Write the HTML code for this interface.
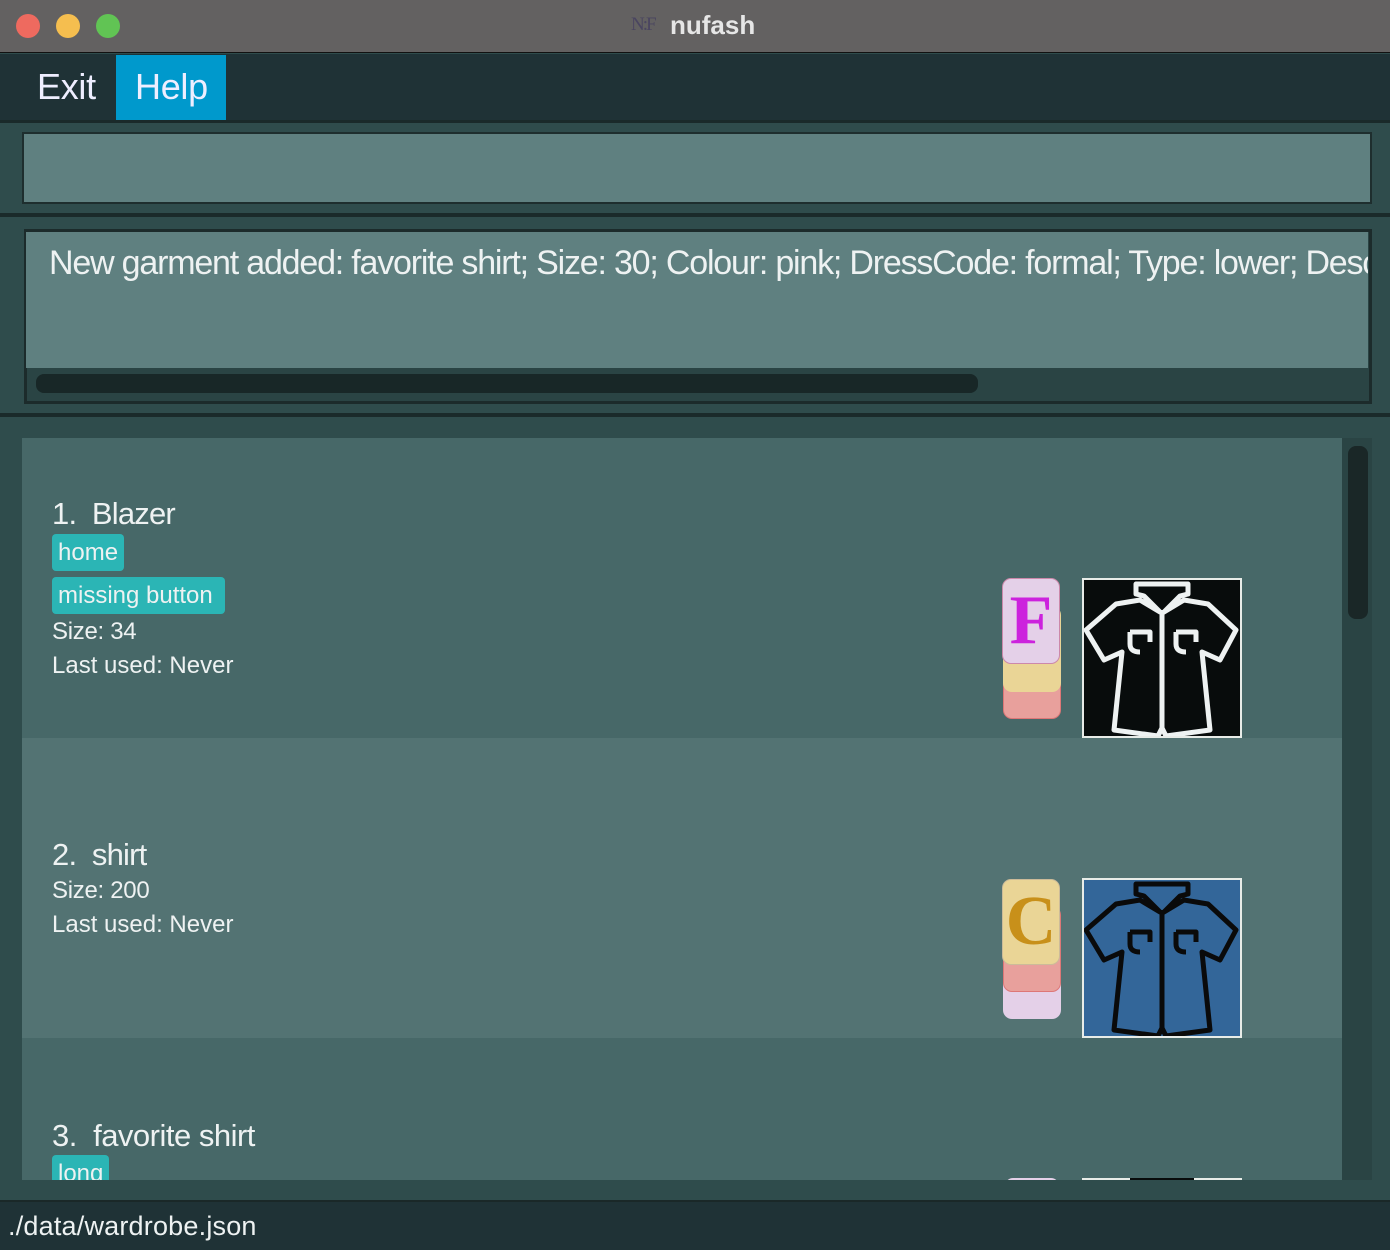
<!DOCTYPE html>
<html><head><meta charset="utf-8"><style>
*{margin:0;padding:0;box-sizing:border-box}
html{overflow:hidden}
body{width:1390px;height:1250px;background:#2f4c4c;font-family:"Liberation Sans",sans-serif;position:relative;overflow:hidden;color:#eef2f2}
.a{position:absolute}
.title{left:0;top:0;width:1390px;height:53px;background:#636161;border-bottom:1px solid #111}
.dot{top:14px;width:24px;height:24px;border-radius:50%}
.menu{left:0;top:54px;width:1390px;height:66px;background:#1f3236}
.sep{left:0;width:1390px;height:4px;background:#1a2a2a}
.t{letter-spacing:-0.3px;white-space:nowrap}
.tag{background:#2bb5b5;border-radius:4px;padding:0 6px;font-size:24px;height:37px;line-height:37px;letter-spacing:0}
.cell{left:22px;width:1320px;height:300px}
.card{width:58px;height:86px;border-radius:9px}
.img{width:160px;height:160px;border:2px solid #e8ece8}
</style></head><body>
<div class="a title"></div>
<div class="a dot" style="left:16px;background:#ee6a5f"></div>
<div class="a dot" style="left:56px;background:#f5be4f"></div>
<div class="a dot" style="left:96px;background:#61c454"></div>
<div class="a" style="left:631px;top:14px;font-family:'Liberation Serif',serif;font-size:19px;color:#4a4560;letter-spacing:-2px">N:F</div>
<div class="a" style="left:670px;top:10px;font-weight:bold;font-size:26px;color:#e6e6e6">nufash</div>
<div class="a menu"></div>
<div class="a" style="left:116px;top:55px;width:110px;height:65px;background:#0099cc"></div>
<div class="a t" style="left:37px;top:66px;font-size:36px;color:#eef">Exit</div>
<div class="a t" style="left:135px;top:66px;font-size:36px;color:#eef">Help</div>
<div class="a sep" style="top:120px;height:3px"></div>
<div class="a" style="left:22px;top:132px;width:1350px;height:72px;background:#5f8080;border:2px solid #1e2e2e"></div>
<div class="a sep" style="top:213px"></div>
<div class="a" style="left:24px;top:229px;width:1348px;height:175px;background:#2a4444;border:3px solid #1c2b2b"></div>
<div class="a" style="left:26px;top:232px;width:1342px;height:136px;background:#5f8080"></div>
<div class="a" style="left:36px;top:374px;width:942px;height:19px;background:#182727;border-radius:8px"></div>
<div class="a" style="left:49px;top:244px;font-size:34px;width:1319px;height:42px;overflow:hidden;white-space:nowrap;letter-spacing:-1.2px">New garment added: favorite shirt; Size: 30; Colour: pink; DressCode: formal; Type: lower; Description: none</div>
<div class="a sep" style="top:413px"></div>
<div class="a" style="left:22px;top:438px;width:1350px;height:742px;overflow:hidden">
 <div class="a" style="left:1320px;top:0;width:30px;height:742px;background:#2a4444"></div>
 <div class="a" style="left:1326px;top:8px;width:20px;height:173px;background:#1a2727;border-radius:8px"></div>
 <div class="a cell" style="left:0;top:0;background:#476868">
  <div class="a t" style="left:30px;top:58px;font-size:31px;letter-spacing:-0.8px">1.&nbsp; Blazer</div>
  <div class="a tag" style="left:30px;top:96px">home</div>
  <div class="a tag" style="left:30px;top:139px;width:173px">missing button</div>
  <div class="a t" style="left:30px;top:180px;font-size:24px">Size: 34</div>
  <div class="a t" style="left:30px;top:214px;font-size:24px;letter-spacing:0">Last used: Never</div>
  <div class="a card" style="left:981px;top:195px;background:#e8a09c;border:1px solid #d77"></div>
  <div class="a card" style="left:981px;top:168px;background:#ead596"></div>
  <div class="a card" style="left:980px;top:140px;background:#e4d0e8;border:1px solid #c8a;font-family:'Liberation Serif',serif;font-size:70px;font-weight:bold;color:#cc22dd;text-align:center;line-height:84px">F</div>
  <div class="a img" style="left:1060px;top:140px;background:#080c0c">
   <svg width="156" height="156" viewBox="0 0 156 156" fill="none" stroke="#eef2f2" stroke-width="5" stroke-linejoin="round"><path d="M52 4H104V14L96 16 80 32 100 20 124 24 152 50 136 80 118 72 126 150 82 156 78 148 74 156 30 150 38 72 20 80 2 50 32 24 56 20 76 32 60 16 52 14Z"/><path d="M78 30V148"/><path d="M46 52H66V62M46 52V64Q46 72 56 72M92 52H112V62M92 52V64Q92 72 102 72"/></svg>
  </div>
 </div>
 <div class="a cell" style="left:0;top:300px;background:#537373">
  <div class="a t" style="left:30px;top:99px;font-size:31px;letter-spacing:-0.8px">2.&nbsp; shirt</div>
  <div class="a t" style="left:30px;top:139px;font-size:24px">Size: 200</div>
  <div class="a t" style="left:30px;top:173px;font-size:24px;letter-spacing:0">Last used: Never</div>
  <div class="a card" style="left:981px;top:195px;background:#e4d0e8"></div>
  <div class="a card" style="left:981px;top:168px;background:#e8a09c;border:1px solid #d77"></div>
  <div class="a card" style="left:980px;top:141px;background:#ead596;border:1px solid #cb9;font-family:'Liberation Serif',serif;font-size:70px;font-weight:bold;color:#c8901a;text-align:center;line-height:84px">C</div>
  <div class="a img" style="left:1060px;top:140px;background:#336699">
   <svg width="156" height="156" viewBox="0 0 156 156" fill="none" stroke="#0a0a0a" stroke-width="5" stroke-linejoin="round"><path d="M52 4H104V14L96 16 80 32 100 20 124 24 152 50 136 80 118 72 126 150 82 156 78 148 74 156 30 150 38 72 20 80 2 50 32 24 56 20 76 32 60 16 52 14Z"/><path d="M78 30V148"/><path d="M46 52H66V62M46 52V64Q46 72 56 72M92 52H112V62M92 52V64Q92 72 102 72"/></svg>
  </div>
 </div>
 <div class="a cell" style="left:0;top:600px;background:#476868">
  <div class="a t" style="left:30px;top:80px;font-size:31px;letter-spacing:-0.5px">3.&nbsp; favorite shirt</div>
  <div class="a tag" style="left:30px;top:117px">long</div>
  <div class="a" style="left:983px;top:140px;width:54px;height:10px;background:#e4d0e8;border-radius:8px 8px 0 0"></div>
  <div class="a" style="left:1060px;top:140px;width:160px;height:10px;background:#e8ece8"></div>
  <div class="a" style="left:1108px;top:140px;width:64px;height:10px;background:#080c0c"></div>
 </div>
</div>
<div class="a" style="left:0;top:1200px;width:1390px;height:50px;background:#1f3236;border-top:2px solid #1a2828"></div>
<div class="a t" style="left:8px;top:1211px;font-size:27px;letter-spacing:0.2px">./data/wardrobe.json</div>
</body></html>
